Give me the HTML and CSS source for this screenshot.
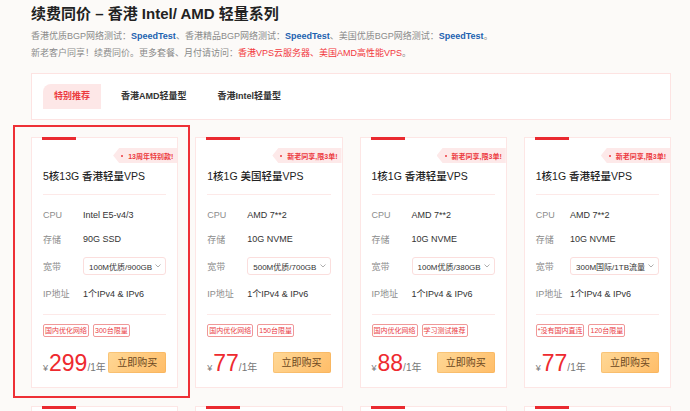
FILE: index.html
```html
<!DOCTYPE html>
<html lang="zh-CN">
<head>
  <meta charset="UTF-8">
  <meta name="viewport" content="width=device-width, initial-scale=1.0">
  <title>续费同价 - 香港 Intel/ AMD 轻量系列</title>
  <link rel="stylesheet" href="styles.css">
</head>
<body>
<div class="page">
  <h1 class="page-title">续费同价 – 香港 Intel/ AMD 轻量系列</h1>
  <p class="intro intro-first">香港优质BGP网络测试：<a class="test-link" href="#">SpeedTest</a>、香港精品BGP网络测试：<a class="test-link" href="#">SpeedTest</a>、美国优质BGP网络测试：<a class="test-link" href="#">SpeedTest</a>。</p>
  <p class="intro">新老客户同享！续费同价。更多套餐、月付请访问：<a class="shop-link" href="#">香港VPS云服务器、美国AMD高性能VPS</a>。</p>

  <div class="tabs">
    <span class="tab is-active">特别推荐</span>
    <span class="tab">香港AMD轻量型</span>
    <span class="tab">香港Intel轻量型</span>
  </div>

  <div class="plans">
    <div class="plan is-marked">
      <div class="plan-badge"><span class="dot"></span>13周年特别款!</div>
      <h3 class="plan-name">5核13G 香港轻量VPS</h3>
      <ul class="specs">
        <li class="spec"><span class="spec-label">CPU</span><span class="spec-value">Intel E5-v4/3</span></li>
        <li class="spec"><span class="spec-label">存储</span><span class="spec-value">90G SSD</span></li>
        <li class="spec">
          <span class="spec-label">宽带</span>
          <div class="select-box">
            <span class="select-text">100M优质/900GB</span>
            <svg width="6" height="4" viewBox="0 0 6 4"><polyline points="0.5 0.5 3 3 5.5 0.5" fill="none" stroke="#999" stroke-width="0.8"/></svg>
          </div>
        </li>
        <li class="spec"><span class="spec-label">IP地址</span><span class="spec-value">1个IPv4 &amp; IPv6</span></li>
      </ul>
      <div class="tags"><span class="tag">国内优化网络</span><span class="tag">300台限量</span></div>
      <div class="buy-row">
        <div class="price"><span class="currency">¥</span><span class="amount">299</span><span class="period">/1年</span></div>
        <a class="buy-btn" href="#">立即购买</a>
      </div>
    </div>

    <div class="plan">
      <div class="plan-badge"><span class="dot"></span>新老同享,限3单!</div>
      <h3 class="plan-name">1核1G 美国轻量VPS</h3>
      <ul class="specs">
        <li class="spec"><span class="spec-label">CPU</span><span class="spec-value">AMD 7**2</span></li>
        <li class="spec"><span class="spec-label">存储</span><span class="spec-value">10G NVME</span></li>
        <li class="spec">
          <span class="spec-label">宽带</span>
          <div class="select-box">
            <span class="select-text">500M优质/700GB</span>
            <svg width="6" height="4" viewBox="0 0 6 4"><polyline points="0.5 0.5 3 3 5.5 0.5" fill="none" stroke="#999" stroke-width="0.8"/></svg>
          </div>
        </li>
        <li class="spec"><span class="spec-label">IP地址</span><span class="spec-value">1个IPv4 &amp; IPv6</span></li>
      </ul>
      <div class="tags"><span class="tag">国内优化网络</span><span class="tag">150台限量</span></div>
      <div class="buy-row">
        <div class="price"><span class="currency">¥</span><span class="amount">77</span><span class="period">/1年</span></div>
        <a class="buy-btn" href="#">立即购买</a>
      </div>
    </div>

    <div class="plan">
      <div class="plan-badge"><span class="dot"></span>新老同享,限3单!</div>
      <h3 class="plan-name">1核1G 香港轻量VPS</h3>
      <ul class="specs">
        <li class="spec"><span class="spec-label">CPU</span><span class="spec-value">AMD 7**2</span></li>
        <li class="spec"><span class="spec-label">存储</span><span class="spec-value">10G NVME</span></li>
        <li class="spec">
          <span class="spec-label">宽带</span>
          <div class="select-box">
            <span class="select-text">100M优质/380GB</span>
            <svg width="6" height="4" viewBox="0 0 6 4"><polyline points="0.5 0.5 3 3 5.5 0.5" fill="none" stroke="#999" stroke-width="0.8"/></svg>
          </div>
        </li>
        <li class="spec"><span class="spec-label">IP地址</span><span class="spec-value">1个IPv4 &amp; IPv6</span></li>
      </ul>
      <div class="tags"><span class="tag">国内优化网络</span><span class="tag">学习测试推荐</span></div>
      <div class="buy-row">
        <div class="price"><span class="currency">¥</span><span class="amount">88</span><span class="period">/1年</span></div>
        <a class="buy-btn" href="#">立即购买</a>
      </div>
    </div>

    <div class="plan">
      <div class="plan-badge"><span class="dot"></span>新老同享,限3单!</div>
      <h3 class="plan-name">1核1G 香港轻量VPS</h3>
      <ul class="specs">
        <li class="spec"><span class="spec-label">CPU</span><span class="spec-value">AMD 7**2</span></li>
        <li class="spec"><span class="spec-label">存储</span><span class="spec-value">10G NVME</span></li>
        <li class="spec">
          <span class="spec-label">宽带</span>
          <div class="select-box">
            <span class="select-text">300M国际/1TB流量</span>
            <svg width="6" height="4" viewBox="0 0 6 4"><polyline points="0.5 0.5 3 3 5.5 0.5" fill="none" stroke="#999" stroke-width="0.8"/></svg>
          </div>
        </li>
        <li class="spec"><span class="spec-label">IP地址</span><span class="spec-value">1个IPv4 &amp; IPv6</span></li>
      </ul>
      <div class="tags"><span class="tag">*没有国内直连</span><span class="tag">120台限量</span></div>
      <div class="buy-row">
        <div class="price"><span class="currency">¥</span><span class="amount">77</span><span class="period">/1年</span></div>
        <a class="buy-btn" href="#">立即购买</a>
      </div>
    </div>

    <!-- next row of plans, continues below the fold -->
    <div class="plan plan-more"></div>
    <div class="plan plan-more"></div>
    <div class="plan plan-more"></div>
    <div class="plan plan-more"></div>
  </div>
</div>
</body>
</html>
```

FILE: styles.css
```css
:root {
  --brand-red: #ea2a30;
  --soft-red: #fde6e5;
  --label-gray: #8c8c8c;
  --text-dark: #333;
}

* {
  box-sizing: border-box;
}

body {
  margin: 0;
  background-color: #fcfaf8;
  font-family: "Liberation Sans", "Noto Sans CJK SC", sans-serif;
  color: var(--text-dark);
}

a {
  text-decoration: none;
}

.page {
  width: 640px;
  margin-left: 31px;
  padding-top: 4px;
}

.page-title {
  margin: 0;
  font-size: 15px;
  line-height: 20px;
  font-weight: 600;
  color: #222;
}

.intro {
  margin: 0;
  font-size: 9px;
  line-height: 17px;
  color: #8a8a8a;
}

.intro-first {
  margin-top: 4px;
}

.test-link {
  color: #1c62b0;
  font-weight: 700;
}

.shop-link {
  color: #f2383d;
}

/* category tabs */
.tabs {
  display: flex;
  gap: 9px;
  margin-top: 11px;
  padding: 10px 11px;
  background: #fff;
  border: 1px solid #fde3e2;
}

.tab {
  height: 25px;
  line-height: 25px;
  padding: 0 11px;
  font-size: 9px;
  font-weight: 700;
  color: var(--text-dark);
}

.tab.is-active {
  background: #fde7e7;
  color: #ec3a3f;
  border-top-left-radius: 8px;
}

/* plan cards */
.plans {
  display: grid;
  grid-template-columns: repeat(4, minmax(0, 1fr));
  gap: 18px 17px;
  margin-top: 17px;
}

.plan {
  position: relative;
  display: flex;
  flex-direction: column;
  min-width: 0;
  padding: 0 11px 14px;
  background: #fff;
  border: 1px solid var(--soft-red);
}

.plan-more {
  height: 250px;
}

.plan::before {
  content: "";
  position: absolute;
  top: -1px;
  left: 10px;
  width: 34px;
  height: 3px;
  background: var(--brand-red);
}

/* highlight frame around the featured plan */
.plan.is-marked::after {
  content: "";
  position: absolute;
  top: -13px;
  right: -13px;
  bottom: -11px;
  left: -19px;
  border: 2px solid #ee3036;
  pointer-events: none;
}

.plan-badge {
  align-self: flex-end;
  display: flex;
  align-items: center;
  height: 15px;
  margin: 10px -11px 0 0;
  padding: 0 4px 0 8px;
  background: #fde9e9;
  color: #ec3a3f;
  font-size: 7px;
  font-weight: 700;
  white-space: nowrap;
  clip-path: polygon(6px 0, 100% 0, 100% 100%, 6px 100%, 0 50%);
}

.plan-badge .dot {
  width: 2px;
  height: 2px;
  margin-right: 5px;
  border-radius: 50%;
  background: #ec3a3f;
}

.plan-name {
  margin: 5px 0 0;
  padding-bottom: 10px;
  font-size: 10.5px;
  line-height: 16px;
  font-weight: 500;
  color: #222;
  border-bottom: 1px solid #fde9e8;
}

/* label column gives way when the bandwidth select needs the room */
.specs {
  display: grid;
  grid-template-columns: minmax(auto, 40px) minmax(max-content, 1fr);
  grid-template-rows: 24px 24px 30px 24px;
  align-items: center;
  list-style: none;
  margin: 0;
  padding: 8px 0 9px;
  font-size: 9px;
  border-bottom: 1px solid #fde9e8;
}

.spec {
  display: contents;
}

.spec-label {
  white-space: nowrap;
  color: var(--label-gray);
}

.spec-value {
  white-space: nowrap;
  color: var(--text-dark);
}

.select-box {
  display: flex;
  align-items: center;
  justify-content: space-between;
  height: 18px;
  padding: 0 4px 0 5px;
  border: 1px solid #fbdedd;
  border-radius: 3px;
  color: var(--text-dark);
}

.select-text {
  font-size: 8px;
  white-space: nowrap;
}

.select-box svg {
  flex-shrink: 0;
  margin-left: 3px;
}

.tags {
  display: flex;
  gap: 4px;
  margin-top: 9px;
}

.tag {
  height: 13px;
  line-height: 11px;
  padding: 0 1px;
  font-size: 7px;
  color: #ea4045;
  border: 1px solid #f09898;
  border-radius: 2px;
  white-space: nowrap;
}

.buy-row {
  display: flex;
  justify-content: space-between;
  align-items: flex-end;
  margin-top: 15px;
}

.price {
  display: flex;
  align-items: baseline;
  margin-bottom: -2px;
  line-height: 1;
}

.currency {
  margin-right: 1px;
  font-size: 9px;
  color: #777;
}

.amount {
  font-size: 23px;
  color: #ee2a2f;
}

.period {
  font-size: 10px;
  color: #777;
}

.buy-btn {
  width: 58px;
  height: 21px;
  line-height: 21px;
  text-align: center;
  font-size: 10px;
  color: #6a4620;
  background: linear-gradient(135deg, #ffd896, #ffbd68);
  border-radius: 2px;
  box-shadow: inset 0 0 0 1px rgba(240, 170, 80, 0.4);
}
```
